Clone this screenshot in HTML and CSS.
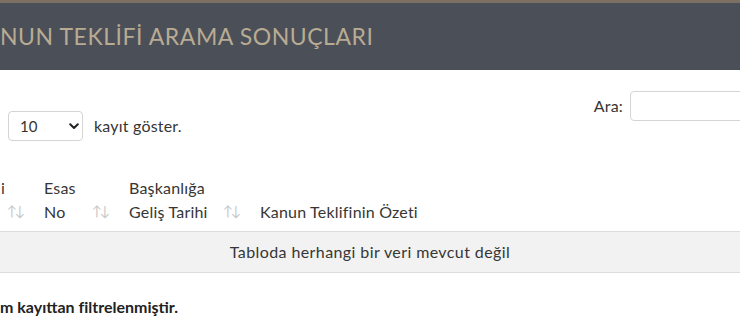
FILE: index.html
```html
<!DOCTYPE html>
<html lang="tr">
<head>
<meta charset="utf-8">
<title>Kanun Teklifi Arama Sonuçları</title>
<link rel="stylesheet" href="styles.css">
</head>
<body>
<header class="page-head">
  <h1 class="page-title">NUN TEKLİFİ ARAMA SONUÇLARI</h1>
</header>
<main class="content">
  <div class="controls">
    <div class="length">
      <span class="select-wrap">
        <select class="length-select">
          <option>10</option>
          <option>25</option>
          <option>50</option>
          <option>100</option>
        </select>
        <svg class="chev" width="10" height="7" viewBox="0 0 10 7"><path d="M1.2 1.3 L5 5 L8.8 1.3" fill="none" stroke="#222" stroke-width="2" stroke-linecap="round" stroke-linejoin="round"/></svg>
      </span>
      <span class="length-label">kayıt göster.</span>
    </div>
    <label class="search">
      <span class="search-label">Ara:</span>
      <input class="search-input" type="search">
    </label>
  </div>
  <table class="results">
    <colgroup>
      <col class="c1"><col class="c2"><col class="c3"><col class="c4">
    </colgroup>
    <thead>
      <tr>
        <th class="sorting first">i</th>
        <th class="sorting">Esas<br>No</th>
        <th class="sorting">Başkanlığa<br>Geliş Tarihi</th>
        <th class="plain">Kanun Teklifinin Özeti</th>
      </tr>
    </thead>
    <tbody>
      <tr class="empty-row">
        <td colspan="4" class="empty">Tabloda herhangi bir veri mevcut değil</td>
      </tr>
    </tbody>
  </table>
  <p class="info">m kayıttan filtrelenmiştir.</p>
</main>
</body>
</html>
```

FILE: styles.css
```css
html, body {
  margin: 0;
  padding: 0;
  background: #ffffff;
}
body {
  font-family: Lato, "Open Sans", "Liberation Sans", sans-serif;
  font-size: 16px;
  line-height: 24px;
  color: #363636;
  letter-spacing: 0.2px;
  overflow: hidden;
}
.page-head {
  border-top: 3px solid #7c7062;
  background: #4b4f58;
  height: 67px;
  display: flex;
  align-items: center;
}
.page-title {
  margin: 0;
  font-weight: 400;
  font-size: 23px;
  letter-spacing: 0.55px;
  color: #b8ab93;
  white-space: nowrap;
  line-height: 30px;
  padding-bottom: 1px;
}
.content {
  padding: 0;
}
.controls {
  display: flex;
  justify-content: space-between;
  align-items: flex-start;
  margin-top: 21px;
}
.length {
  display: flex;
  align-items: center;
  margin-top: 20px;
  padding-left: 8px;
}
.select-wrap {
  position: relative;
  display: inline-block;
}
.length-select {
  appearance: none;
  -webkit-appearance: none;
  width: 75px;
  height: 30px;
  border: 1px solid #d4d4d4;
  border-radius: 4px;
  background: #fff;
  font-family: inherit;
  font-size: 15px;
  color: #333;
  padding: 0 0 0 11px;
  margin: 0;
  display: block;
}
.chev {
  position: absolute;
  right: 4px;
  top: 12px;
  pointer-events: none;
}
.length-label {
  margin-left: 11px;
}
.search {
  display: flex;
  align-items: center;
  gap: 7px;
  margin-right: -40px;
}
.search-input {
  width: 150px;
  height: 30px;
  box-sizing: border-box;
  border: 1px solid #d4d4d4;
  border-radius: 4px;
  margin: 0;
  padding: 0 8px;
  font-family: inherit;
  font-size: 15px;
}
.results {
  margin-top: 27px;
  width: 740px;
  border-collapse: collapse;
  table-layout: fixed;
}
.c1 { width: 33px; }
.c2 { width: 85px; }
.c3 { width: 131px; }
.c4 { width: auto; }
.results th {
  position: relative;
  text-align: left;
  font-weight: 400;
  vertical-align: bottom;
  padding: 8px 30px 7px 11px;
  border-bottom: 1px solid #dcdcdc;
  white-space: nowrap;
  overflow: visible;
}
.results th.first {
  padding-left: 1px;
  vertical-align: top;
}
.results th.plain {
  padding-right: 11px;
}
.results th.sorting::before,
.results th.sorting::after {
  position: absolute;
  bottom: 13px;
  font-size: 14px;
  line-height: 14px;
  color: #c8c8c8;
  letter-spacing: 0;
}
.results th.sorting::before {
  content: "\2191";
  right: 16px;
}
.results th.sorting::after {
  content: "\2193";
  right: 8px;
}
.empty-row {
  background: #f2f2f2;
}
.empty {
  text-align: center;
  padding: 8px 0;
  border-bottom: 1px solid #dcdcdc;
  letter-spacing: 0.4px;
}
.info {
  margin: 22px 0 0 0;
  font-weight: 700;
  color: #222;
  letter-spacing: 0;
}
```
